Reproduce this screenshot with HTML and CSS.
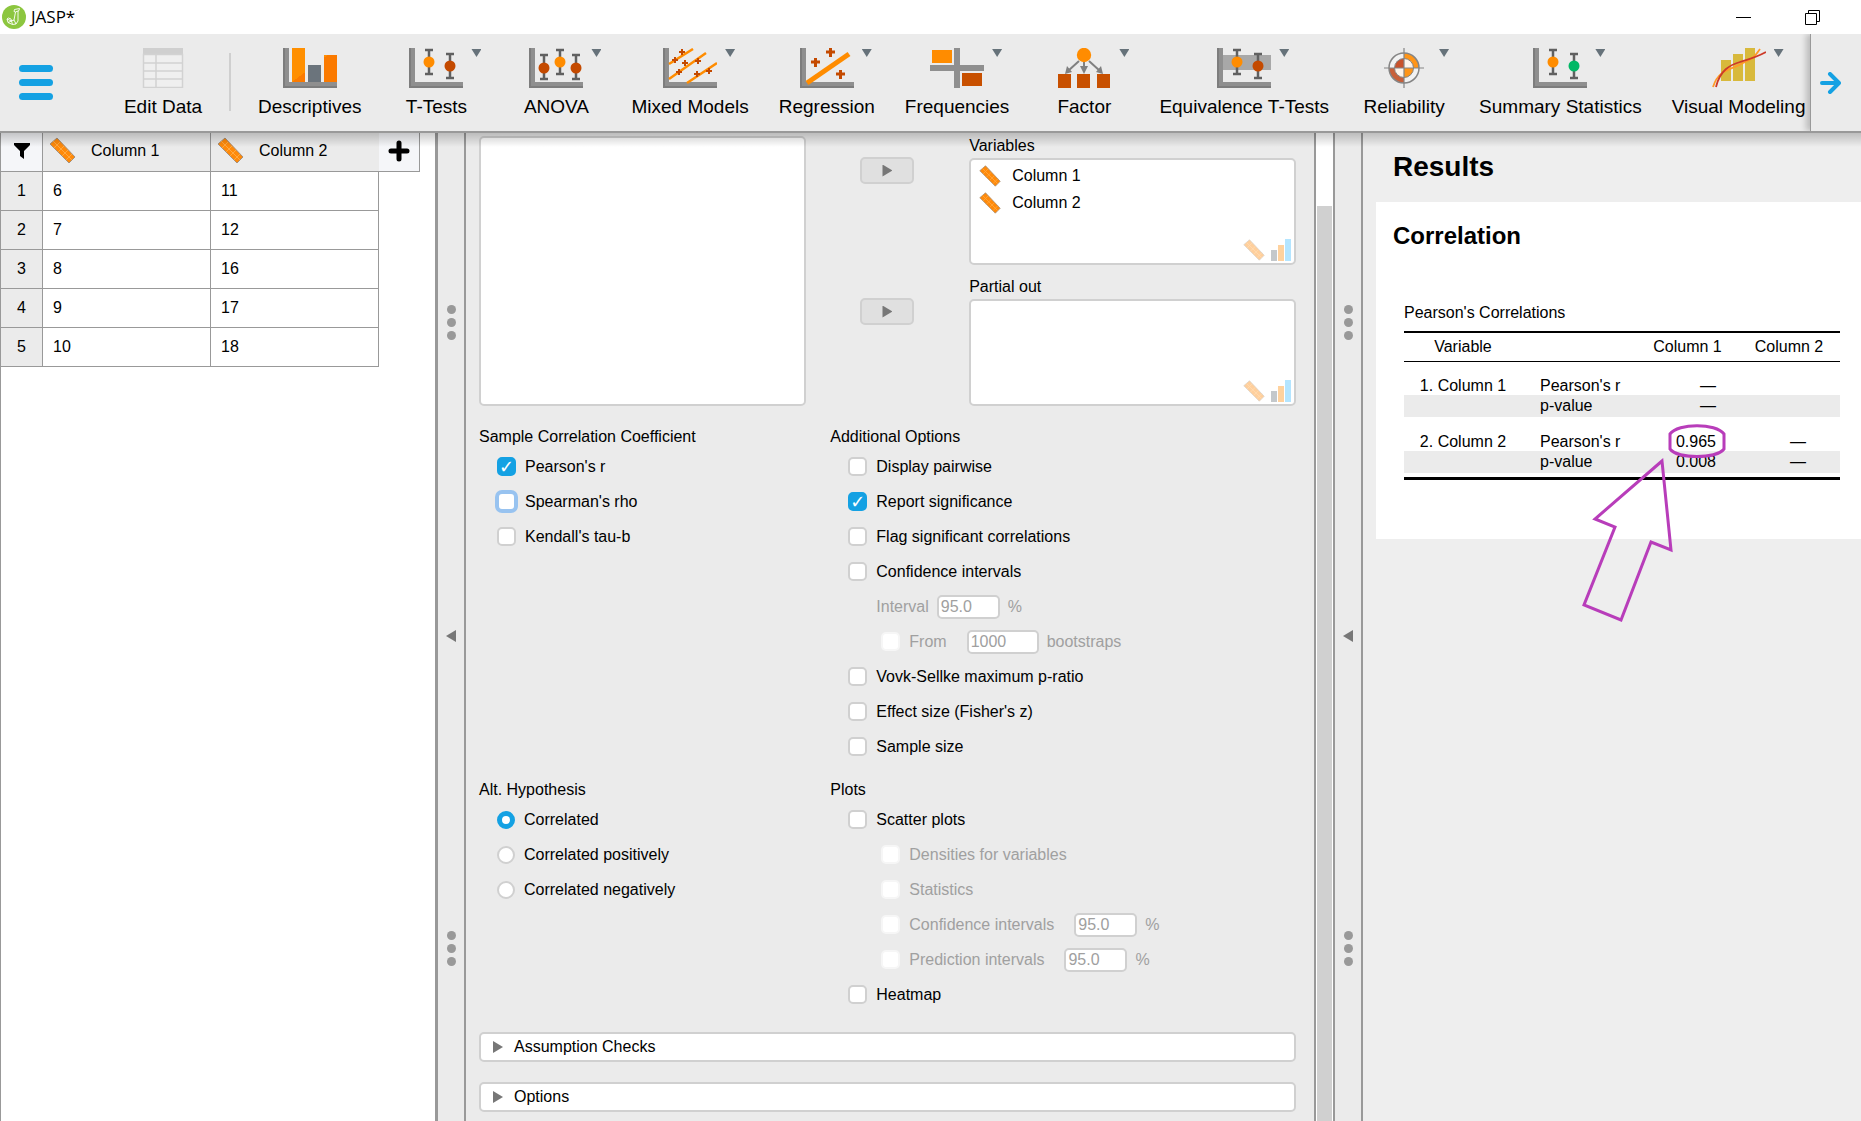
FILE: index.html
```html
<!DOCTYPE html>
<html lang="en">
<head>
<meta charset="utf-8">
<meta name="viewport" content="width=device-width, initial-scale=1">
<title>JASP*</title>
<link rel="stylesheet" href="styles.css">
</head>
<body>
<svg class="defs" aria-hidden="true">
  <defs>
    <linearGradient id="orange-fill" x1="0" y1="0" x2="1" y2="1">
      <stop offset="0.5" stop-color="#ff8f00"/><stop offset="0.5" stop-color="#fb7a00"/>
    </linearGradient>
    <symbol id="axes" viewBox="0 0 54 40">
      <path d="M0 0h6v34h48v6H0z" fill="#8f8f8f"/>
      <path d="M0 0h2v38h52v2H0z" fill="#7d7d7d"/>
    </symbol>
    <symbol id="error-bar" viewBox="0 0 10 28">
      <path d="M5 1v26M1 2h8M1 26h8" stroke="#606060" stroke-width="2.500" fill="none"/>
    </symbol>
    <symbol id="ruler" viewBox="0 0 27 27">
      <path d="M8 1 26 20 20 26 1 7z" fill="#ff8a0a" stroke="#a89078" stroke-width="1"/>
      <path d="M4 4 23 23M11 5 5 11M15 9 9 15M19 13l-6 6M23 17l-6 6" stroke="#ffa840" stroke-width="1" fill="none"/>
    </symbol>
    <symbol id="ordinal" viewBox="0 0 20 22">
      <path d="M0 11h6v11H0z" fill="#6d7780"/><path d="M7 6h6v16H7z" fill="#ff9010"/><path d="M14 0h6v22h-6z" fill="#45c0ff"/>
    </symbol>
  </defs>
</svg>

<header class="titlebar">
  <svg class="logo" viewBox="0 0 24 24" aria-hidden="true">
    <circle cx="12" cy="12" r="12" fill="#8cc63f"/>
    <path d="M12.500 4.500 17.500 3.500 17 5.500 16 6 16 16 14 19 10.500 19.500 6 17.500 5 14 6.500 13 9 14 9.500 16 12 15 13.500 7 12 6.500zM13.500 7 16 6M5 14 9.500 16 10.500 19.500M6 17.500 9.500 16M12 15 14 19" fill="none" stroke="#fff" stroke-width="0.900"/>
  </svg>
  <h1 class="window-title">JASP*</h1>
  <div class="window-controls">
    <button type="button" aria-label="Minimize"><svg width="15" height="15" viewBox="0 0 15 15"><path d="M0 7.500h15" stroke="#000"/></svg></button>
    <button type="button" aria-label="Restore"><svg width="15" height="15" viewBox="0 0 15 15"><path d="M.5 3.500h11v11h-11zM3.500 3V.5h11v11H12" stroke="#000" fill="none"/></svg></button>
  </div>
</header>

<nav class="ribbon" aria-label="Analyses">
  <button type="button" class="menu-button" aria-label="Main menu"><span></span><span></span><span></span></button>
  <div class="modules">
    <button type="button" class="module edit-data">
      <svg class="module-icon" viewBox="0 0 54 40"><path d="M7 0h40v40H7z" fill="#efefef"/><path d="M7 0h40v7H7z" fill="#cfcfcf"/><path d="M7.500 6.500h39v33h-39zM7 15h40M7 23h40M7 31h40M20 7v33" fill="none" stroke="#d2d2d2" stroke-width="1.500"/></svg>
      <span class="module-name">Edit Data</span>
    </button>
    <span class="divider"></span>
    <button type="button" class="module">
      <svg class="module-icon" viewBox="0 0 54 40"><use href="#axes"/><path d="M9 0h13v34H9zM41 7h13v27H41z" fill="url(#orange-fill)"/><path d="M25 17h13v17H25z" fill="#6b747c"/></svg>
      <span class="module-name">Descriptives</span>
    </button>
    <button type="button" class="module">
      <svg class="module-icon" viewBox="0 0 54 40"><use href="#axes"/><use href="#error-bar" x="15" y="0" width="10" height="28"/><use href="#error-bar" x="36" y="4" width="10" height="28"/><circle cx="20" cy="14" r="5.500" fill="#ff8c00"/><circle cx="41" cy="18" r="5.500" fill="#c44a00"/></svg>
      <span class="arrow-down"></span><span class="module-name">T-Tests</span>
    </button>
    <button type="button" class="module">
      <svg class="module-icon" viewBox="0 0 54 40"><use href="#axes"/><use href="#error-bar" x="10" y="5" width="10" height="28"/><use href="#error-bar" x="26" y="0" width="10" height="28"/><use href="#error-bar" x="42" y="5" width="10" height="28"/><circle cx="15" cy="20" r="5.500" fill="#c44a00"/><circle cx="31" cy="14" r="5.500" fill="#ff8c00"/><circle cx="47" cy="20" r="5.500" fill="#c44a00"/></svg>
      <span class="arrow-down"></span><span class="module-name">ANOVA</span>
    </button>
    <button type="button" class="module">
      <svg class="module-icon" viewBox="0 0 54 40"><use href="#axes"/><path d="M6 16 30 1M6 31 43 5M24 35 54 15" stroke="#ff8c00" stroke-width="2.500"/><path d="M16 4h6M19 1v6M9 12h6M12 9v6M19 15h6M22 12v6M32 13h6M35 10v6M13 24h6M16 21v6M31 26h6M34 23v6M43 23h6M46 20v6" stroke="#c44a00" stroke-width="2"/></svg>
      <span class="arrow-down"></span><span class="module-name">Mixed Models</span>
    </button>
    <button type="button" class="module">
      <svg class="module-icon" viewBox="0 0 54 40"><use href="#axes"/><path d="M7 35 49 6" stroke="#ff8c00" stroke-width="5"/><path d="M11 14h9M15.500 10v9M26 4h9M30.500 0v9M36 26h9M40.500 22v9" stroke="#c44a00" stroke-width="3"/></svg>
      <span class="arrow-down"></span><span class="module-name">Regression</span>
    </button>
    <button type="button" class="module">
      <svg class="module-icon" viewBox="0 0 54 40"><path d="M24 0h6v40h-6zM0 17h54v6H0z" fill="#8f8f8f"/><path d="M2 2h20v13H2z" fill="#ff8c00"/><path d="M32 25h20v13H32z" fill="#c85000"/></svg>
      <span class="arrow-down"></span><span class="module-name">Frequencies</span>
    </button>
    <button type="button" class="module">
      <svg class="module-icon" viewBox="0 0 54 40"><path d="M22 13 11 23M27 14v9M32 13l11 10" stroke="#808080" stroke-width="2"/><path d="M8 26l2-8 5 6zM23 18h8l-4 8zM46 26l-2-8-5 6z" fill="#808080"/><circle cx="27" cy="7" r="7.200" fill="#ff8c00"/><path d="M1 26h13v14H1zM20 26h13v14H20zM40 26h13v14H40z" fill="#c85000"/></svg>
      <span class="arrow-down"></span><span class="module-name">Factor</span>
    </button>
    <button type="button" class="module">
      <svg class="module-icon" viewBox="0 0 54 40"><path d="M6 7h48v15H6z" fill="#a8a8a8"/><use href="#axes"/><use href="#error-bar" x="15" y="0" width="10" height="28"/><use href="#error-bar" x="36" y="4" width="10" height="28"/><circle cx="20" cy="14" r="5.500" fill="#ff8c00"/><circle cx="41" cy="18" r="5.500" fill="#c44a00"/></svg>
      <span class="arrow-down"></span><span class="module-name">Equivalence T-Tests</span>
    </button>
    <button type="button" class="module">
      <svg class="module-icon" viewBox="0 0 54 40"><circle cx="27" cy="20" r="15" fill="#f2f2f2"/><path d="M27 5a15 15 0 0 1 15 15H27z" fill="#ff9518"/><path d="M27 35a15 15 0 0 1-15-15H27z" fill="#c8603a"/><circle cx="27" cy="20" r="9.500" fill="#fdf3ea"/><path d="M27 10.500a9.500 9.500 0 0 0-9.500 9.500H27z" fill="#c8522c"/><path d="M27 29.500a9.500 9.500 0 0 0 9.500-9.500H27z" fill="#ff9518"/><circle cx="27" cy="20" r="15" fill="none" stroke="#858585" stroke-width="1.500"/><circle cx="27" cy="20" r="9.500" fill="none" stroke="#858585"/><path d="M27 0v40M7 20h40" stroke="#858585" stroke-width="1.200"/></svg>
      <span class="arrow-down"></span><span class="module-name">Reliability</span>
    </button>
    <button type="button" class="module">
      <svg class="module-icon" viewBox="0 0 54 40"><use href="#axes"/><use href="#error-bar" x="15" y="0" width="10" height="28"/><use href="#error-bar" x="36" y="4" width="10" height="28"/><circle cx="20" cy="14" r="5.500" fill="#ff8c00"/><circle cx="41" cy="18" r="5.500" fill="#00b865"/></svg>
      <span class="arrow-down"></span><span class="module-name">Summary Statistics</span>
    </button>
    <button type="button" class="module">
      <svg class="module-icon" viewBox="0 0 54 40"><path d="M9 12h10v21H9zM21 6h10v27H21zM33 0h10v33H33z" fill="#d8b93c"/><path d="M1 39C7 20 20 22 31 15 41 11 44 7 48 1" fill="none" stroke="#ff9a28" stroke-width="1.800"/><path d="M4 39C8 22 18 17 28 14 38 11 45 9 54 4" fill="none" stroke="#cc3a28" stroke-width="1.800"/></svg>
      <span class="arrow-down"></span><span class="module-name">Visual Modeling</span>
    </button>
  </div>
  <button type="button" class="ribbon-next" aria-label="More modules"><svg width="21" height="22" viewBox="0 0 21 22"><path d="M2 11h16M10 2l9 9-9 9" fill="none" stroke="#14a1e3" stroke-width="4" stroke-linecap="round" stroke-linejoin="round"/></svg></button>
</nav>

<main class="workspace">
  <section class="data-panel" aria-label="Data">
    <table class="data">
      <colgroup><col class="c-num"><col class="c-val"><col class="c-val"><col class="c-add"></colgroup>
      <thead>
        <tr>
          <th class="tool"><button type="button" aria-label="Filter"><svg width="18" height="18" viewBox="0 0 18 18"><path d="M1 1h16v2l-6 6v8l-4-3V9L1 3z"/></svg></button></th>
          <th><div class="col-head"><svg class="ruler-lg"><use href="#ruler"/></svg><span>Column 1</span></div></th>
          <th class="last"><div class="col-head"><svg class="ruler-lg"><use href="#ruler"/></svg><span>Column 2</span></div></th>
          <th class="tool add"><button type="button" aria-label="Add column"><svg width="22" height="22" viewBox="0 0 22 22"><path d="M11 3v16M3 11h16" stroke="#000" stroke-width="5" stroke-linecap="round"/></svg></button></th>
        </tr>
      </thead>
      <tbody>
        <tr><th scope="row">1</th><td>6</td><td>11</td></tr>
        <tr><th scope="row">2</th><td>7</td><td>12</td></tr>
        <tr><th scope="row">3</th><td>8</td><td>16</td></tr>
        <tr><th scope="row">4</th><td>9</td><td>17</td></tr>
        <tr><th scope="row">5</th><td>10</td><td>18</td></tr>
      </tbody>
    </table>
  </section>

  <div class="splitter wide">
    <div class="grip"><i></i><i></i><i></i></div>
    <button type="button" class="collapse" aria-label="Collapse data"><span></span></button>
    <div class="grip"><i></i><i></i><i></i></div>
  </div>

  <form class="analysis">
    <div class="assign">
      <div class="listbox available" role="listbox" aria-label="Available variables"></div>
      <button type="button" class="assign-button" aria-label="Assign to Variables"><span class="arrow-right"></span></button>
      <div class="target">
        <div class="target-title" id="t-vars">Variables</div>
        <div class="listbox" role="listbox" aria-labelledby="t-vars">
          <div class="entry" role="option"><svg class="ruler-sm"><use href="#ruler"/></svg>Column 1</div>
          <div class="entry" role="option"><svg class="ruler-sm"><use href="#ruler"/></svg>Column 2</div>
          <div class="allowed"><svg class="ruler-sm"><use href="#ruler"/></svg><svg class="ordinal"><use href="#ordinal"/></svg></div>
        </div>
      </div>
      <button type="button" class="assign-button" aria-label="Assign to Partial out"><span class="arrow-right"></span></button>
      <div class="target">
        <div class="target-title" id="t-part">Partial out</div>
        <div class="listbox" role="listbox" aria-labelledby="t-part">
          <div class="allowed"><svg class="ruler-sm"><use href="#ruler"/></svg><svg class="ordinal"><use href="#ordinal"/></svg></div>
        </div>
      </div>
    </div>

    <div class="options">
      <fieldset>
        <legend>Sample Correlation Coefficient</legend>
        <div class="rows">
          <label class="row"><input type="checkbox" checked>Pearson's r</label>
          <label class="row"><input type="checkbox" class="focused">Spearman's rho</label>
          <label class="row"><input type="checkbox">Kendall's tau-b</label>
        </div>
      </fieldset>
      <fieldset>
        <legend>Additional Options</legend>
        <div class="rows">
          <label class="row"><input type="checkbox">Display pairwise</label>
          <label class="row"><input type="checkbox" checked>Report significance</label>
          <label class="row"><input type="checkbox">Flag significant correlations</label>
          <label class="row"><input type="checkbox">Confidence intervals</label>
          <div class="row field off"><label for="interval">Interval</label><input type="text" id="interval" value="95.0" disabled><span>%</span></div>
          <div class="row sub off"><label class="tick"><input type="checkbox" disabled>From</label><input type="text" class="long" value="1000" aria-label="Number of bootstraps" disabled><span>bootstraps</span></div>
          <label class="row"><input type="checkbox">Vovk-Sellke maximum p-ratio</label>
          <label class="row"><input type="checkbox">Effect size (Fisher's z)</label>
          <label class="row"><input type="checkbox">Sample size</label>
        </div>
      </fieldset>
      <fieldset>
        <legend>Alt. Hypothesis</legend>
        <div class="rows">
          <label class="row"><input type="radio" name="alt" checked>Correlated</label>
          <label class="row"><input type="radio" name="alt">Correlated positively</label>
          <label class="row"><input type="radio" name="alt">Correlated negatively</label>
        </div>
      </fieldset>
      <fieldset>
        <legend>Plots</legend>
        <div class="rows">
          <label class="row"><input type="checkbox">Scatter plots</label>
          <label class="row sub off"><input type="checkbox" disabled>Densities for variables</label>
          <label class="row sub off"><input type="checkbox" disabled>Statistics</label>
          <div class="row sub off"><label class="tick"><input type="checkbox" disabled>Confidence intervals</label><input type="text" value="95.0" aria-label="Confidence level" disabled><span>%</span></div>
          <div class="row sub off"><label class="tick"><input type="checkbox" disabled>Prediction intervals</label><input type="text" value="95.0" aria-label="Prediction level" disabled><span>%</span></div>
          <label class="row"><input type="checkbox">Heatmap</label>
        </div>
      </fieldset>
    </div>

    <div class="expanders">
      <button type="button" class="expander"><span class="arrow-right"></span>Assumption Checks</button>
      <button type="button" class="expander"><span class="arrow-right"></span>Options</button>
    </div>
  </form>

  <div class="scrollbar"><div class="thumb"></div></div>

  <div class="splitter">
    <div class="grip"><i></i><i></i><i></i></div>
    <button type="button" class="collapse" aria-label="Collapse analysis"><span></span></button>
    <div class="grip"><i></i><i></i><i></i></div>
  </div>

  <section class="results">
    <h2>Results</h2>
    <article class="result">
      <h3>Correlation</h3>
      <table class="stats">
        <caption>Pearson's Correlations</caption>
        <colgroup><col class="s-var"><col class="s-stat"><col class="s-one"><col class="s-two"></colgroup>
        <thead><tr><th>Variable</th><th></th><th>Column 1</th><th>Column 2</th></tr></thead>
        <tbody>
          <tr class="first"><th scope="row">1. Column 1</th><td>Pearson's r</td><td>—</td><td></td></tr>
          <tr class="stripe"><th></th><td>p-value</td><td>—</td><td></td></tr>
          <tr class="first"><th scope="row">2. Column 2</th><td>Pearson's r</td><td>0.965</td><td>—</td></tr>
          <tr class="stripe"><th></th><td>p-value</td><td>0.008</td><td>—</td></tr>
          <tr class="end"><td colspan="4"></td></tr>
        </tbody>
      </table>
      <svg class="callout" viewBox="0 0 150 205" aria-hidden="true">
        <path d="M90 14C98 3 136 3 144 14V29C136 39 98 39 90 29zM82 41 15 99 35 107 4 185 41 200 71 122 91 130z" fill="none" stroke="#b83dba" stroke-width="3"/>
      </svg>
    </article>
  </section>
</main>
</body>
</html>
```
FILE: styles.css
```css
* { box-sizing: border-box; }

body {
  margin: 0;
  height: 100vh;
  display: flex;
  flex-direction: column;
  overflow: hidden;
  background: #ebebeb;
  color: #000;
  font: 16px/22px "Liberation Sans", Arial, sans-serif;
}

button {
  font: inherit;
  color: inherit;
  background: none;
  border: 0;
  padding: 0;
}

.defs { position: absolute; width: 0; height: 0; }

/* Title bar */
.titlebar {
  flex: none;
  display: flex;
  align-items: center;
  height: 34px;
  padding: 0 14px 0 2px;
  background: #fff;
}
.logo { width: 24px; height: 24px; }
.window-title {
  margin: 0 0 0 5px;
  font: 17px/22px "Open Sans", "Noto Sans", sans-serif;
}
.window-controls { display: flex; margin-left: auto; }
.window-controls button {
  display: flex;
  align-items: center;
  justify-content: center;
  width: 69px;
  height: 34px;
}

/* Ribbon */
.ribbon {
  flex: none;
  position: relative;
  z-index: 1;
  display: flex;
  height: 99px;
  border-bottom: 2px solid #999;
  background: #ebebeb;
}
.ribbon::after {
  content: "";
  position: absolute;
  top: 99px;
  left: 0;
  right: 0;
  height: 14px;
  background: linear-gradient(rgba(0, 0, 0, .2), rgba(0, 0, 0, 0));
  pointer-events: none;
}
.menu-button {
  flex: none;
  display: flex;
  flex-direction: column;
  gap: 7px;
  padding: 31px 19px 0;
}
.menu-button span { width: 34px; height: 7px; border-radius: 4px; background: #14a1e3; }
.modules {
  flex: 1;
  min-width: 0;
  display: flex;
  align-items: flex-start;
  gap: 28px;
  padding: 14px 0 0 45px;
  overflow: hidden;
}
.module {
  flex: none;
  display: grid;
  grid-template-columns: minmax(18px, 1fr) 54px minmax(18px, 1fr);
  row-gap: 7px;
  padding: 0 1px;
}
.module-icon { grid-column: 2; width: 54px; height: 40px; }
.arrow-down {
  width: 10px;
  height: 8px;
  margin: 1px 0 0 8px;
  background: #66727a;
  clip-path: polygon(0 0, 100% 0, 50% 100%);
}
.module-name {
  grid-column: 1 / -1;
  justify-self: center;
  font-size: 19px;
  line-height: 24px;
  white-space: nowrap;
}
.divider { flex: none; width: 2px; height: 58px; margin: 5px -2px 0 -8px; background: #cfcfcf; }
.ribbon-next {
  flex: none;
  display: flex;
  align-items: center;
  justify-content: center;
  width: 51px;
  padding-right: 11px;
  border-left: 1px solid #999;
  box-shadow: -4px 0 6px rgba(0, 0, 0, .2);
  clip-path: inset(0 0 0 -12px);
}

/* Workspace */
.workspace {
  flex: 1;
  min-height: 0;
  display: grid;
  grid-template-columns: minmax(0, 435fr) auto minmax(0, 848fr) auto auto minmax(0, 498fr);
}

/* Data */
.data-panel { background: #fff; border-left: 1px solid #999; overflow: hidden; }
.data { border-collapse: collapse; table-layout: fixed; width: 419px; margin-left: -1px; }
.c-num { width: 42px; }
.c-val { width: 168px; }
.c-add { width: 41px; }
.data th, .data td { height: 39px; padding: 0 10px; border: 1px solid #999; }
.data th { font-weight: normal; background: #ebebeb; text-align: center; padding: 0; }
.data thead th { height: 38px; padding-bottom: 2px; border-top: 0; }
.data thead .last { border-right: 0; }
.data thead .tool { background: #f5f6f9; }
.data thead .add { border-left: 0; }
.tool button { display: flex; align-items: center; justify-content: center; width: 100%; }
.col-head { display: flex; align-items: center; }
.col-head svg { margin: 0 15px 0 6px; }
.ruler-lg { width: 27px; height: 27px; }

/* Splitters */
.splitter {
  display: grid;
  grid-template-rows: 383fr 240px 365fr;
  width: 30px;
  border: solid #999;
  border-width: 0 2px;
  background: #ebebeb;
}
.splitter.wide { width: 31px; border-left-width: 3px; }
.grip { display: flex; flex-direction: column; align-items: center; justify-content: center; gap: 4px; padding-bottom: 4px; }
.grip:last-child { padding: 20px 0 0; }
.grip i { width: 9px; height: 9px; border-radius: 50%; background: #999; }
.collapse { display: flex; align-items: center; justify-content: center; }
.collapse span { width: 10px; height: 12px; background: #777; clip-path: polygon(100% 0, 100% 100%, 0 50%); }

/* Analysis form */
.analysis { padding: 3px 18px 0 13px; overflow: hidden; }
.assign {
  display: grid;
  grid-template-columns: 2fr 1fr 2fr;
  gap: 12px 0;
}
.target-title { padding-bottom: 2px; line-height: 20px; }
.listbox {
  position: relative;
  height: 107px;
  padding: 5px 8px;
  border: 2px solid #d0d0d0;
  border-radius: 5px;
  background: #fff;
}
.available { grid-row: 1 / 3; height: auto; }
.assign-button {
  display: flex;
  align-items: center;
  justify-content: center;
  justify-self: center;
  width: 54px;
  height: 27px;
  margin-top: 21px;
  border: 2px solid #d0d0d0;
  border-radius: 5px;
  background: #e0e0e0;
}
.arrow-right { width: 10px; height: 12px; background: #777; clip-path: polygon(0 0, 100% 50%, 0 100%); }
.entry { display: flex; align-items: center; gap: 11px; height: 22px; margin-bottom: 5px; }
.ruler-sm { width: 22px; height: 22px; }
.ordinal { width: 20px; height: 22px; }
.allowed { position: absolute; right: 3px; bottom: 2px; display: flex; gap: 6px; opacity: .4; }

.options {
  display: grid;
  grid-template-columns: 43fr 57fr;
  gap: 20px 0;
  padding-top: 20px;
}
fieldset { min-width: 0; margin: 0; padding: 0; border: 0; }
legend { padding: 0; }
.rows { display: flex; flex-direction: column; gap: 10px; padding: 6px 0 0 18px; }
.row { display: flex; align-items: center; gap: 9px; height: 25px; }
.field { gap: 8px; padding-left: 28px; }
.sub { gap: 8px; padding-left: 33px; }
label.sub { gap: 9px; }
.off { color: #a0a0a0; }
.tick { display: flex; align-items: center; gap: 9px; margin-right: 12px; }

input { margin: 0; font: inherit; color: inherit; }
input[type="checkbox"], input[type="radio"] {
  appearance: none;
  flex: none;
  display: flex;
  align-items: center;
  justify-content: center;
  width: 19px;
  height: 19px;
  border: 2px solid #d0d0d0;
  border-radius: 5px;
  background: #fff;
}
input[type="checkbox"]:checked { border-color: #14a1e3; background: #14a1e3; }
input[type="checkbox"]:checked::before {
  content: "✓";
  color: #fff;
  font: bold 18px/15px "DejaVu Sans", sans-serif;
}
input[type="checkbox"]:disabled { border-color: #f6f6f6; }
input[type="checkbox"].focused { border-color: #98c3f0; box-shadow: 0 0 0 2px #98c3f0; }
input[type="radio"] { width: 18px; height: 18px; border-radius: 50%; }
input[type="radio"]:checked { border: 5px solid #14a1e3; }
input[type="text"] {
  width: 63px;
  height: 24px;
  padding: 0 2px;
  border: 2px solid #d0d0d0;
  border-radius: 5px;
  background: #fff;
}
input[type="text"].long { width: 72px; }

.expanders { display: flex; flex-direction: column; gap: 20px; padding-top: 25px; }
.expander {
  display: flex;
  align-items: center;
  gap: 11px;
  height: 30px;
  padding-left: 12px;
  border: 2px solid #d0d0d0;
  border-radius: 5px;
  background: #fff;
}

.scrollbar { width: 19px; padding: 73px 1px 0; border-left: 2px solid #999; background: #fff; }
.thumb { height: 100%; background: #d0d0d0; }

/* Results */
.results { padding: 18px 0 0 13px; background: #eee; overflow: hidden; }
.results h2 { margin: 0 0 19px; padding-left: 17px; font-size: 28px; line-height: 32px; }
.result { position: relative; height: 337px; padding: 20px 21px 0 28px; background: #fff; }
.result h3 { margin: 0 -11px 48px; font-size: 24px; line-height: 28px; }
.stats {
  width: 436px;
  table-layout: fixed;
  border-collapse: collapse;
  border-bottom: 3px solid #000;
  line-height: 18px;
}
.s-var { width: 118px; }
.s-stat { width: 115px; }
.s-one { width: 101px; }
.s-two { width: 102px; }
.stats caption { padding: 6px 0 9px; text-align: left; }
.stats th { padding: 0; font-weight: normal; text-align: center; }
.stats thead th { height: 29px; border-top: 2px solid #000; border-bottom: 1px solid #000; }
.stats td { padding: 0; text-align: right; }
.stats td:nth-child(2) { padding-left: 18px; text-align: left; }
.stats td:nth-child(3) { padding-right: 22px; }
.stats td:nth-child(4) { padding-right: 34px; }
.first th, .first td { height: 34px; vertical-align: bottom; }
.stripe th, .stripe td { height: 22px; background: #ebebeb; }
.end td { height: 5px; line-height: 0; }
.callout { position: absolute; left: 204px; top: 218px; width: 150px; height: 205px; }
```
